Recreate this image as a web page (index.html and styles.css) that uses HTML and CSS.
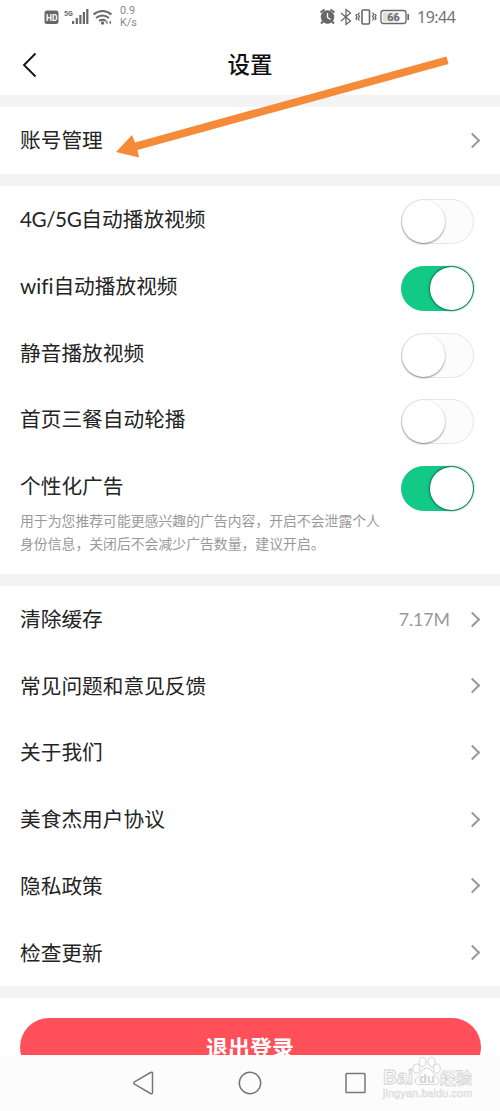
FILE: index.html
```html
<!DOCTYPE html>
<html lang="zh-CN">
<head>
<meta charset="utf-8">
<title>设置</title>
<link rel="stylesheet" href="styles.css">
</head>
<body>
<div class="screen">
  <div class="status">
    <svg class="status-left" width="72" height="22" viewBox="0 0 72 22">
      <rect x="0.500" y="4.500" width="14" height="13.500" rx="2.500" fill="#686868"/>
      <text x="2" y="14.800" class="hd">HD</text>
      <text x="20" y="9.500" class="gen">5G</text>
      <g fill="#686868"><rect x="28" y="15" width="2.200" height="3"/><rect x="31.700" y="12" width="2.200" height="6"/><rect x="35.300" y="9" width="2.200" height="9"/><rect x="38.800" y="6" width="2.200" height="12"/><rect x="42.200" y="3" width="2.200" height="15"/></g>
      <g fill="none" stroke="#686868" stroke-width="2"><path d="M49.500 8.500q9-7 18 0M52 12q6.500-5 13 0M55 15q3.500-2.500 7 0"/></g>
      <circle cx="58.500" cy="17" r="1.700" fill="#686868"/>
      <path d="M61.500 16.500l2-2v4zM67 14.500v4l-2-2z" fill="#686868"/>
    </svg>
    <div class="speed"><span>0.9</span><span>K/s</span></div>
    <svg class="status-right" width="92" height="22" viewBox="0 0 92 22" fill="none" stroke="#686868">
      <circle cx="8.500" cy="11" r="6.300" fill="#686868"/>
      <path d="M1.500 6.500l4-3M15.500 6.500l-4-3M4 15.500l-2 2M13 15.500l2 2" stroke-width="2"/>
      <path d="M8.500 7v4.500l3 2" stroke="#fff" stroke-width="1.300"/>
      <path d="M22 7l9.500 8-4.500 3.500v-15L31.500 7 22 15" stroke-width="1.300"/>
      <rect x="43" y="4" width="7.500" height="14" rx="1" stroke-width="1.600"/>
      <path d="M40.500 6.500l-1.300 2 1.300 2-1.300 2 1.300 2M38 8l-1 1.500 1 1.500-1 1.500 1 1.500M53.500 6.500l1.300 2-1.300 2 1.300 2-1.300 2M56 8l1 1.500-1 1.500 1 1.500-1 1.500" stroke-width="1.300"/>
      <rect x="62" y="4.500" width="25" height="13" rx="2.500" stroke-width="1.300"/>
      <rect x="64" y="6.500" width="15" height="9" fill="#ddd" stroke="none"/>
      <path d="M89.200 8v6" stroke-width="1.700"/>
      <text x="68.300" y="15" class="batt">66</text>
    </svg>
    <span class="clock">19:44</span>
  </div>
  <header class="header">
    <svg class="back" width="16" height="26" viewBox="0 0 16 26"><path d="M13.500 1.500L2 13l11.500 11.500" fill="none" stroke="#161616" stroke-width="1.900"/></svg>
    <h1 class="title">设置</h1>
  </header>
  <section class="group">
    <div class="row account"><span>账号管理</span><i class="chevron"></i></div>
  </section>
  <section class="group">
    <div class="row"><span><span class="latin">4G/5G</span>自动播放视频</span><i class="switch"></i></div>
    <div class="row"><span>wifi自动播放视频</span><i class="switch on"></i></div>
    <div class="row"><span>静音播放视频</span><i class="switch"></i></div>
    <div class="row"><span>首页三餐自动轮播</span><i class="switch"></i></div>
    <div class="row"><span>个性化广告</span><i class="switch on"></i></div>
    <p class="note">用于为您推荐可能更感兴趣的广告内容，开启不会泄露个人<br>身份信息，关闭后不会减少广告数量，建议开启。</p>
  </section>
  <section class="group">
    <div class="row"><span>清除缓存</span><span class="value">7.17M</span><i class="chevron"></i></div>
    <div class="row"><span>常见问题和意见反馈</span><i class="chevron"></i></div>
    <div class="row"><span>关于我们</span><i class="chevron"></i></div>
    <div class="row"><span>美食杰用户协议</span><i class="chevron"></i></div>
    <div class="row"><span>隐私政策</span><i class="chevron"></i></div>
    <div class="row"><span>检查更新</span><i class="chevron"></i></div>
  </section>
  <section class="group logout-area">
    <div class="logout">退出登录</div>
  </section>
  <nav class="navbar">
    <svg width="500" height="56" viewBox="0 0 500 56" fill="none" stroke="#777" stroke-width="1.500" stroke-linejoin="round">
      <path d="M134.500 26.800q-1.500 1.200 0 2.400l16 9.300q2 .8 2-1V18.500q0-2-2-1z"/>
      <circle cx="250" cy="28" r="10.700"/>
      <rect x="346" y="18.500" width="19" height="19" rx="0.800"/>
      <g class="mark">
        <text x="383" y="29" class="mark-name" textLength="30" lengthAdjust="spacingAndGlyphs">Bai</text>
        <path d="M427 13q-4 0-6 4.500t-5 6q-3 6 4 6h14q7 0 4-6-3-1.500-5-6t-6-4.500z"/>
        <ellipse cx="416.500" cy="13.500" rx="3.500" ry="4.500"/><ellipse cx="422.500" cy="7" rx="3.500" ry="4.700"/><ellipse cx="431.500" cy="7" rx="3.500" ry="4.700"/><ellipse cx="437" cy="13.500" rx="3.300" ry="4.500"/>
        <text x="419" y="27.500" class="mark-du">du</text>
        <text x="440" y="28.500" class="mark-cn">经验</text>
        <text x="383" y="42" class="mark-url" textLength="89">jingyan.baidu.com</text>
      </g>
    </svg>
  </nav>
  <svg class="arrow" width="334" height="104" viewBox="0 0 334 104"><path d="M330.500 1.500l2 7.500L21.500 95 23 102.500 0 97 16 80 19 87.500z" fill="#f58b39"/></svg>
</div>
</body>
</html>
```
FILE: styles.css
```css
* { box-sizing: border-box; }
body {
  margin: 0;
  background: #fff;
  color: #242424;
  font-family: "Noto Sans CJK SC", sans-serif;
}
.screen {
  position: relative;
  width: 500px;
  height: 1111px;
  overflow: hidden;
  display: flex;
  flex-direction: column;
}
.status {
  height: 36px;
  flex: none;
  display: flex;
  align-items: flex-start;
  padding: 6px 0 0 44px;
  color: #737373;
}
.hd { font: bold 8.500px Roboto, sans-serif; fill: #fff; }
.gen { font: bold 7px Roboto, sans-serif; fill: #686868; }
.batt { font: bold 11px Roboto, sans-serif; fill: #686868; stroke: none; }
.speed {
  display: flex;
  flex-direction: column;
  margin: -1px 0 0 4px;
  width: 30px;
  font: 10.800px/12px Roboto, sans-serif;
  color: #888;
}
.status-right { margin-left: 169px; }
.clock {
  margin-left: 6px;
  font: 16px/22px "Noto Sans", sans-serif;
  letter-spacing: -0.500px;
}
.header {
  height: 58.500px;
  flex: none;
  display: flex;
  align-items: center;
  padding: 0 22px;
}
.back { width: 16px; flex: none; }
.title {
  flex: 1;
  margin: -5px 16px 0 0;
  text-align: center;
  font-size: 22.500px;
  font-weight: 500;
  line-height: 30px;
  font-family: KaiTi, "Noto Sans CJK SC", sans-serif;
  color: #111;
}
.group { flex: none; border-top: 12px solid #f4f4f4; }
.row {
  height: 66.700px;
  display: flex;
  align-items: center;
  padding: 0 26px 0 20px;
  font-family: Lato, "Noto Sans CJK SC", sans-serif;
  font-size: 20.700px;
  line-height: 30px;
  font-variant-ligatures: none;
}
.row.account { height: 67.300px; }
.row > :first-child { flex: 1; }
.latin { letter-spacing: -0.450px; }
.chevron {
  width: 11px;
  height: 11px;
  border: solid #999;
  border-width: 2px 2px 0 0;
  transform: translateX(3px) rotate(45deg);
  margin-right: -1px;
}
.value { font-size: 17.700px; padding-top: 1px; color: #999; margin-right: 14px; }
.switch {
  width: 73px;
  height: 45px;
  margin-top: 5px;
  border-radius: 23px;
  border: 1.500px solid #e6e6e6;
  background: #fcfcfc;
  display: flex;
}
.switch::before {
  content: "";
  width: 43px;
  height: 43px;
  border-radius: 50%;
  background: #fff;
  box-shadow: 0 1px 2px rgba(0, 0, 0, .45);
}
.switch.on {
  background: #12ca86;
  border-color: #12ca86;
  justify-content: flex-end;
}
.switch.on::before { box-shadow: 0 0 2px 1px rgba(0, 60, 40, .6); }
.note {
  margin: -10px 0 0;
  height: 64.500px;
  padding-left: 20px;
  font-size: 13.850px;
  line-height: 22.300px;
  color: #999;
  white-space: nowrap;
}
.logout-area {
  height: 69.300px;
  padding: 20px 19.500px 0;
  overflow: hidden;
}
.logout {
  height: 58px;
  border-radius: 29px;
  background: #ff4f59;
  color: #fff;
  font-size: 22px;
  font-weight: 700;
  line-height: 56px;
  text-align: center;
}
.navbar { height: 56px; flex: none; background: #fcfcfc; }
.navbar svg { display: block; }
.mark { fill: #fff; stroke: #cfcfcf; stroke-width: 0.900; }
.mark-name { font: bold 21px "Liberation Sans", sans-serif; }
.mark-du { font: bold 13px "Liberation Sans", sans-serif; fill: #d2d2d2; stroke: none; }
.mark-cn { font: bold 16px "Noto Sans CJK SC", sans-serif; stroke-width: 0.700; }
.mark-url { font: 10.500px "Liberation Sans", sans-serif; fill: #fff; stroke: #dedede; stroke-width: 0.700; }
.arrow { position: absolute; left: 116px; top: 55px; }
```
